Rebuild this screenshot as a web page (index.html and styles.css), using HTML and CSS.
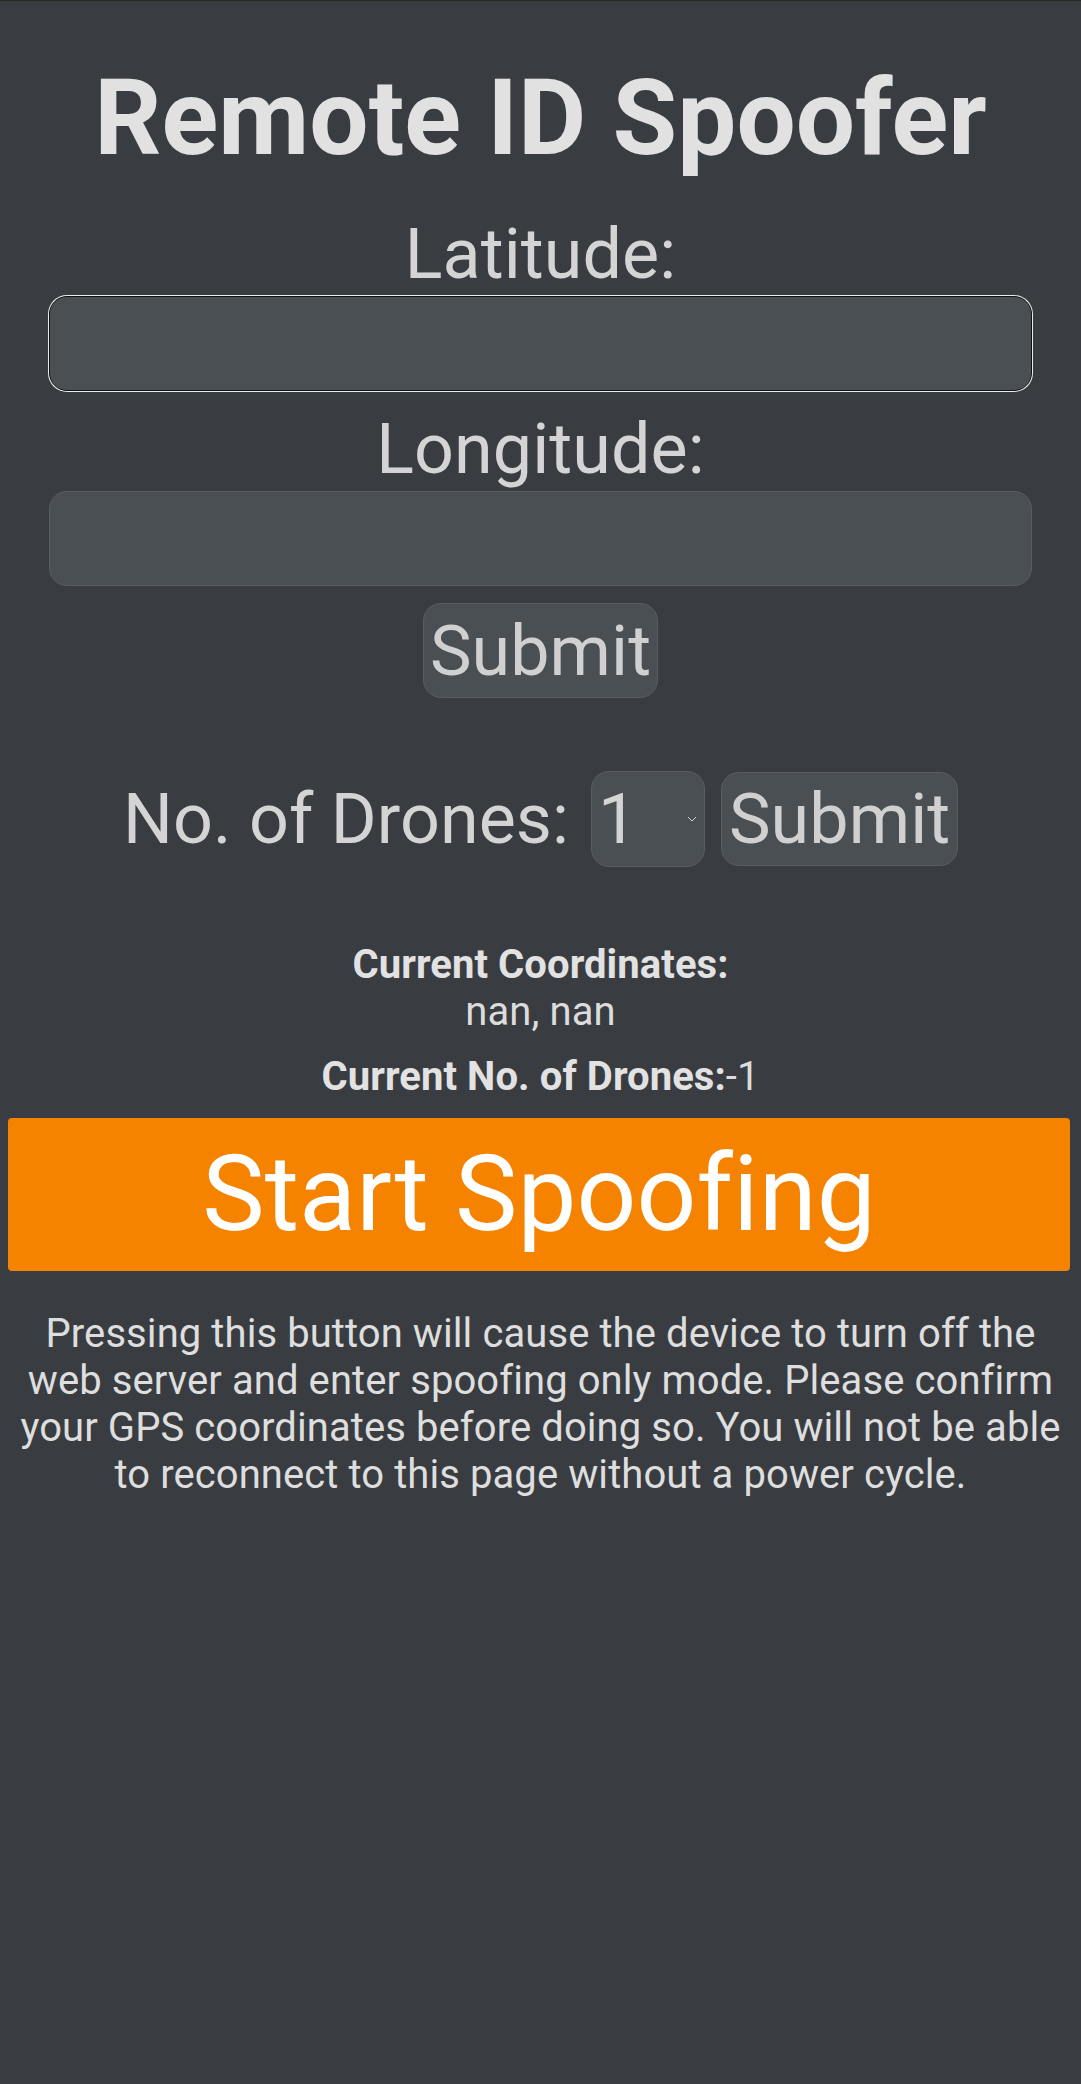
FILE: index.html
```html
<!DOCTYPE html>
<html lang="en">
<head>
<meta charset="utf-8">
<title>Remote ID Spoofer</title>
<link rel="stylesheet" href="styles.css">
</head>
<body>
<main class="page">
  <h1 class="title">Remote ID Spoofer</h1>
  <form class="coords">
    <label class="field-label" for="lat">Latitude:</label>
    <input class="field field-focus" id="lat" type="text">
    <label class="field-label" for="lon">Longitude:</label>
    <input class="field" id="lon" type="text">
    <button class="btn" type="button">Submit</button>
  </form>
  <form class="drones">
    <label class="drones-label" for="count">No. of Drones:</label>
    <span class="select-wrap">
      <select class="select" id="count"><option>1</option><option>2</option><option>3</option></select>
      <svg class="chev" width="10" height="6" viewBox="0 0 10 6"><path d="M1 1 L5 5 L9 1" fill="none" stroke="#cfcfcf" stroke-width="1"/></svg>
    </span>
    <button class="btn" type="button">Submit</button>
  </form>
  <section class="info">
    <p class="info-line"><b>Current Coordinates:</b><br>nan, nan</p>
    <p class="info-line info-second"><b>Current No. of Drones:</b>-1</p>
  </section>
  <button class="start" type="button">Start Spoofing</button>
  <p class="note">Pressing this button will cause the device to turn off the web server and enter spoofing only mode. Please confirm your GPS coordinates before doing so. You will not be able to reconnect to this page without a power cycle.</p>
</main>
</body>
</html>
```
FILE: styles.css
```css
html {
  background: #393d42;
}
body {
  margin: 0;
  padding: 0 8px;
  border-top: 1px solid #262824;
  background: #393d42;
  font-family: Roboto, "Liberation Sans", sans-serif;
  color: #d4d4d4;
  text-align: center;
  letter-spacing: 0.005em;
  min-height: 2083px;
}
.page {
  display: flex;
  flex-direction: column;
  align-items: stretch;
}
.title {
  margin: 56px 0 33px;
  font-size: 105px;
  font-weight: 700;
  line-height: normal;
  color: #e1e1e1;
}
.coords {
  display: flex;
  flex-direction: column;
  align-items: center;
}
.field-label {
  display: block;
  font-size: 70px;
  line-height: normal;
  color: #d4d4d4;
}
.field {
  box-sizing: border-box;
  width: calc(100% - 82px);
  height: 95px;
  margin: 1px 0 17px;
  padding: 0 12px;
  border: 1px solid #5a5e62;
  border-radius: 18px;
  background: #4a4f53;
  color: #d4d4d4;
  font-family: inherit;
  font-size: 70px;
  letter-spacing: inherit;
  outline: none;
}
.field-focus {
  border-color: #111213;
  box-shadow: 0 0 0 1px #ececec;
}
.btn {
  box-sizing: border-box;
  height: 95px;
  padding: 0 6px;
  border: 1px solid #5a5e62;
  border-radius: 18px;
  background: #4a4f53;
  color: #d0d0d0;
  font-family: inherit;
  font-size: 70px;
  letter-spacing: inherit;
  line-height: normal;
}
.drones {
  display: flex;
  justify-content: center;
  align-items: center;
  margin-top: 73px;
}
.drones-label {
  font-size: 70px;
  line-height: normal;
  color: #d4d4d4;
  margin-right: 22px;
}
.select-wrap {
  position: relative;
  display: block;
  margin-right: 16px;
}
.select {
  display: block;
  box-sizing: border-box;
  width: 114px;
  height: 96px;
  padding: 0 0 0 6px;
  border: 1px solid #5a5e62;
  border-radius: 18px;
  background: #4a4f53;
  color: #d4d4d4;
  font-family: inherit;
  font-size: 70px;
  -webkit-appearance: none;
  appearance: none;
  outline: none;
}
.chev {
  position: absolute;
  right: 8px;
  top: 45px;
}
.drones .btn {
  width: 237px;
  height: 94px;
}
.info {
  margin-top: 74px;
  font-size: 40px;
  line-height: normal;
  color: #dcdcdc;
}
.info-line {
  margin: 0;
}
.info-line b {
  color: #e2e2e2;
}
.info-second {
  margin-top: 18px;
}
.start {
  box-sizing: border-box;
  width: calc(100% - 3px);
  height: 153px;
  margin-top: 18px;
  padding: 0;
  border: none;
  border-radius: 4px;
  background: #f58300;
  color: #ffffff;
  font-family: inherit;
  font-size: 105px;
  letter-spacing: inherit;
  line-height: normal;
}
.note {
  margin: 39px 0 0;
  font-size: 40px;
  line-height: normal;
  color: #dedede;
}
```
